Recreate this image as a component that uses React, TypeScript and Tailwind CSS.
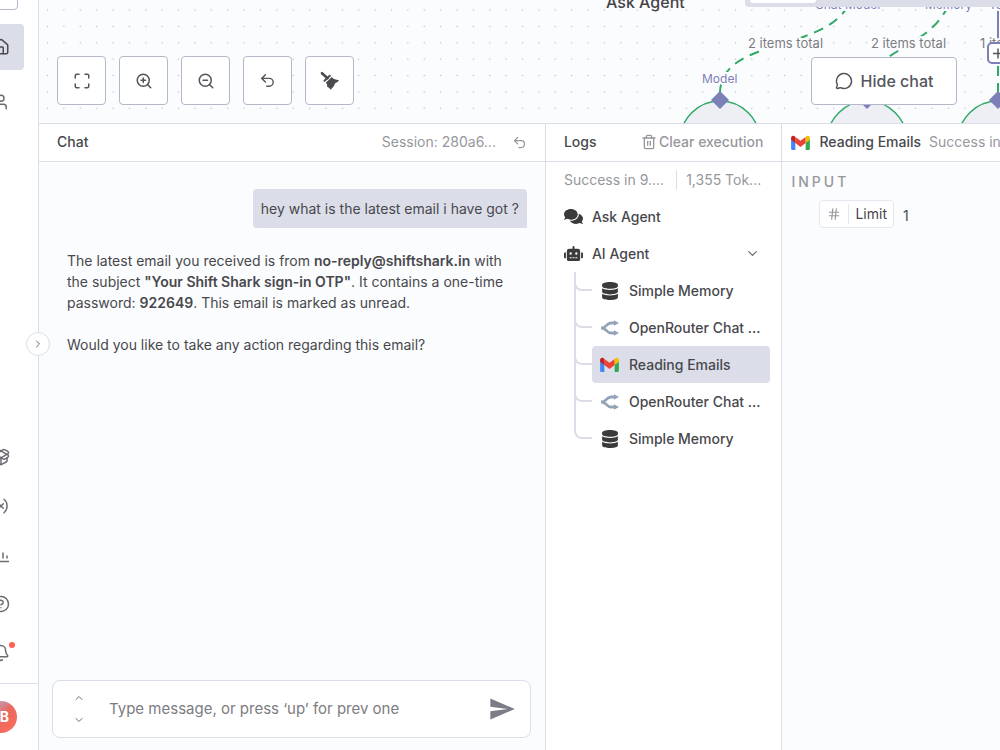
import type { ReactNode } from "react";
import {
  ChevronDown,
  ChevronRight,
  ChevronUp,
  CircleHelp,
  Bell,
  Hash,
  House,
  Maximize,
  MessageCircle,
  PackageOpen,
  Trash2,
  Undo2,
  User,
  Variable,
  ZoomIn,
  ZoomOut,
} from "lucide-react";
import { FaComments, FaDatabase, FaRobot } from "react-icons/fa";
import { MdSend } from "react-icons/md";

function GmailIcon() {
  return (
    <svg viewBox="0 0 20 16" className="h-[15px] w-[19px] shrink-0" aria-hidden="true">
      <path d="M0 3v11.5A1.4 1.4 0 0 0 1.4 16H4.5V6.5Z" fill="#4285f4" />
      <path d="M20 3v11.5a1.4 1.4 0 0 1-1.4 1.5H15.5V6.5Z" fill="#34a853" />
      <path d="M4.5 2v6.5L10 12.7l5.5-4.2V2L10 6.2Z" fill="#ea4335" />
      <path d="M0 3v2.1l4.5 3.4V2l-.8-.6C2.2.3 0 1.2 0 3Z" fill="#c5221f" />
      <path d="M20 3v2.1l-4.5 3.4V2l.8-.6C17.8.3 20 1.2 20 3Z" fill="#fbbc04" />
    </svg>
  );
}

function OpenRouterIcon() {
  return (
    <svg viewBox="0 0 20 16" className="h-4 w-5 shrink-0" aria-hidden="true">
      <path
        d="M1 8h1c4 0 4.5-5 9-5h4M1 8h1c4 0 4.5 5 9 5h4"
        fill="none"
        stroke="#94a3b8"
        strokeWidth="2.8"
      />
      <path d="M14 .2L19 3l-5 2.8ZM14 10.2l5 2.8-5 2.8Z" fill="#94a3b8" />
    </svg>
  );
}

function BroomIcon() {
  return (
    <svg viewBox="0 0 20 20" className="size-5" fill="#4a4a4f" aria-hidden="true">
      <path d="M2 2.2l5.5 5" stroke="#4a4a4f" strokeWidth="2.6" strokeLinecap="round" />
      <path d="M4.5 9.8L9.8 4.8" stroke="#4a4a4f" strokeWidth="2" strokeLinecap="round" />
      <path d="M5.8 11.7L11.8 6c1.5 2.6 4.2 2.6 7.2 3.2-1 2.2-3 1.8-4 3.3-.6 2-2.2 4.500-4.600 6.300-.6-1.600-1.600-2.300-3.400-3.300.4-1.400.2-2.500-1.200-3.800Z" />
    </svg>
  );
}

function InsightsIcon() {
  return (
    <svg viewBox="0 0 18 18" className="size-[18px]" fill="none" stroke="currentColor" strokeWidth="1.5" aria-hidden="true">
      <path d="M1 15.5h16M3 12.5v-3M7 12.5v-8M11 12.5v-6M15 12.5v-3" />
    </svg>
  );
}

const tools = [
  { label: "Zoom to fit", icon: <Maximize size={18} /> },
  { label: "Zoom in", icon: <ZoomIn size={18} /> },
  { label: "Zoom out", icon: <ZoomOut size={18} /> },
  { label: "Reset zoom", icon: <Undo2 size={17} /> },
  { label: "Tidy up", icon: <BroomIcon /> },
];

const subNodes = [
  { name: "Simple Memory", icon: <FaDatabase size={18} /> },
  { name: "OpenRouter Chat ...", icon: <OpenRouterIcon /> },
  { name: "Reading Emails", icon: <GmailIcon />, active: true },
  { name: "OpenRouter Chat ...", icon: <OpenRouterIcon /> },
  { name: "Simple Memory", icon: <FaDatabase size={18} /> },
];

function SideItem({ label, children }: { label: string; children: ReactNode }) {
  return (
    <a
      href="#"
      aria-label={label}
      className="flex h-[49px] items-center justify-center text-[#6b6b72]"
    >
      {children}
    </a>
  );
}

function Sidebar() {
  return (
    <aside className="relative w-[39px] shrink-0 border-r border-[#dbdee9] bg-white">
      <div className="flex h-full flex-col overflow-hidden">
        <div className="-ml-[22px] flex w-[46px] flex-1 flex-col">
          <button
            aria-label="Add"
            className="-mt-4 h-[26px] w-[40px] shrink-0 rounded border border-[#b4b7c9]"
          />
          <a
            href="#"
            aria-label="Overview"
            className="mt-[14px] flex h-[46px] items-center justify-center rounded bg-[#dbdee9] text-[#4a4a4f]"
          >
            <House size={18} />
          </a>
          <div className="mt-[7px]">
            <SideItem label="Personal">
              <User size={18} />
            </SideItem>
          </div>
          <nav className="mt-auto mb-[6px]">
            <SideItem label="Templates">
              <PackageOpen size={18} />
            </SideItem>
            <SideItem label="Variables">
              <Variable size={18} />
            </SideItem>
            <SideItem label="Insights">
              <InsightsIcon />
            </SideItem>
            <SideItem label="Help">
              <CircleHelp size={18} />
            </SideItem>
            <SideItem label="What's new">
              <span className="relative">
                <Bell size={18} />
                <span className="absolute -top-[2px] -right-[5px] size-[6px] rounded-full bg-[#ff6150]" />
              </span>
            </SideItem>
          </nav>
        </div>
        <div className="flex h-[67px] items-center border-t border-[#dbdee9]">
          <div className="-ml-[15px] flex size-8 items-center justify-end rounded-full bg-linear-to-br from-[#8fb4f0] via-[#e8685f] to-[#ff6f5c] pr-2 text-sm font-bold text-white">
            B
          </div>
        </div>
      </div>
      <button
        aria-label="Expand menu"
        className="absolute top-[332px] -right-[12px] z-10 flex size-6 items-center justify-center rounded-full border border-[#dbdee9] bg-white text-[#6b6b72]"
      >
        <ChevronRight size={12} />
      </button>
    </aside>
  );
}

function AgentNode({ x }: { x: number }) {
  return (
    <g>
      <circle cx={x} cy={141} r={40} fill="#eeeff5" stroke="#2fa968" strokeWidth={1.5} />
      <path d={`M${x} 91l9 9-9 9-9-9Z`} fill="#7d7fb9" />
    </g>
  );
}

function Canvas() {
  return (
    <section className="relative h-[123px] shrink-0 overflow-hidden bg-[#fbfcfe]">
      <svg className="absolute inset-0 size-full" aria-hidden="true">
        <pattern id="dots" x="0.3" y="1.8" width="16.38" height="16.38" patternUnits="userSpaceOnUse">
          <circle cx="8.2" cy="8.2" r="0.7" fill="#b9bccb" />
        </pattern>
        <rect width="100%" height="100%" fill="url(#dots)" />
      </svg>
      <svg viewBox="39 0 961 123" className="absolute top-0 left-0 h-[123px] w-[961px] font-['Inter',sans-serif]">
        <g fill="none" stroke="#2fa968" strokeWidth="2" strokeDasharray="10 7">
          <path d="M848 6C822 52 722 38 720 92" />
          <path d="M948 6C928 50 870 48 867 92" />
          <path d="M998 66V92" />
        </g>
        <path d="M998 6V44" stroke="#7d7fb9" strokeWidth="2" />
        <AgentNode x={720} />
        <AgentNode x={867} />
        <AgentNode x={998} />
        <g fontSize="12" fill="#7d7fb9" stroke="#fbfcfe" strokeWidth="4" paintOrder="stroke">
          <text x="702" y="83">Model</text>
          <text x="815" y="9">Chat Model</text>
          <text x="925" y="9">Memory</text>
          <text x="989" y="9">Tool</text>
        </g>
        <g fontSize="13" fill="#7c7c82" stroke="#fbfcfe" strokeWidth="4" paintOrder="stroke">
          <text x="748" y="48">2 items total</text>
          <text x="871" y="48">2 items total</text>
          <text x="980" y="48">1 item</text>
        </g>
        <rect x="988" y="43" width="20" height="20" rx="4" fill="#fff" stroke="#7d7fb9" strokeWidth="2" />
        <path d="M993 53.5h10M998 48.5v10" stroke="#55555c" strokeWidth="1.5" />
        <text x="606" y="8" fontSize="16" fontWeight="500" fill="#444448">Ask Agent</text>
      </svg>
      <div className="absolute top-0 right-0 left-[706px] h-[7px] rounded-bl bg-[#dbdee9] pl-[5px]">
        <div className="h-[3px] w-[66px] rounded-b bg-white" />
      </div>
      <div className="absolute top-[56px] left-[18px] flex gap-[13px]">
        {tools.map((tool) => (
          <button
            key={tool.label}
            aria-label={tool.label}
            className="flex size-[49px] items-center justify-center rounded border border-[#b4b7c9] bg-white text-[#55555c]"
          >
            {tool.icon}
          </button>
        ))}
      </div>
      <button className="absolute top-[57px] left-[772px] flex h-12 w-[146px] items-center justify-center gap-2 rounded border border-[#b4b7c9] bg-white text-base font-medium text-[#55555c]">
        <MessageCircle size={18} />
        Hide chat
      </button>
    </section>
  );
}

function ChatPanel() {
  return (
    <section className="flex min-w-0 flex-[507] flex-col border-r border-[#dbdee9] bg-[#fbfcfe]">
      <header className="flex h-[38px] shrink-0 items-center border-b border-[#dbdee9] bg-white px-[18px] pb-px">
        <h2 className="flex-1 font-medium">Chat</h2>
        <span className="text-[#97979d]">Session: 280a6...</span>
        <button aria-label="Reset session" className="ml-4 text-[#97979d]">
          <Undo2 size={15} />
        </button>
      </header>
      <div className="flex flex-1 flex-col px-[18px] pt-[27px] leading-[21px]">
        <p className="self-end rounded rounded-br-none bg-[#dbdee9] px-2 py-[9px]">
          hey what is the latest email i have got ?
        </p>
        <div className="px-[10px] pt-[22px]">
          <p>
            The latest email you received is from <strong className="font-semibold">no-reply@shiftshark.in</strong> with
            the subject <strong className="font-semibold">"Your Shift Shark sign-in OTP"</strong>. It contains a
            one-time password: <strong className="font-semibold">922649</strong>. This email is marked as unread.
          </p>
          <p className="mt-[21px]">Would you like to take any action regarding this email?</p>
        </div>
      </div>
      <form className="mr-[14px] mb-3 ml-[13px] flex h-[58px] items-center rounded-lg border border-[#dbdee9] bg-white pr-[14px] pl-5">
        <div className="flex flex-col gap-[10px] text-[#6b6b72]">
          <button type="button" aria-label="Previous message">
            <ChevronUp size={12} />
          </button>
          <button type="button" aria-label="Next message">
            <ChevronDown size={12} />
          </button>
        </div>
        <input
          aria-label="Message"
          placeholder="Type message, or press ‘up’ for prev one"
          className="ml-6 min-w-0 flex-1 text-[15px] outline-none placeholder:text-[#7c7c82]"
        />
        <button type="submit" aria-label="Send" className="text-[#7b7c85]">
          <MdSend size={28} />
        </button>
      </form>
    </section>
  );
}

function LogsPanel() {
  return (
    <section className="flex min-w-0 flex-[236] flex-col border-r border-[#dbdee9] bg-white">
      <header className="flex h-[38px] shrink-0 items-center justify-between border-b border-[#dbdee9] px-[18px] pb-px">
        <h2 className="font-medium">Logs</h2>
        <button className="flex items-center gap-[2px] font-medium text-[#97979d]">
          <Trash2 size={16} />
          Clear execution
        </button>
      </header>
      <div className="flex h-9 items-center px-[18px] whitespace-nowrap text-[#97979d]">
        <span>Success in 9....</span>
        <span className="ml-3 border-l border-[#dbdee9] pl-[9px]">1,355 Tok...</span>
      </div>
      <ul className="pr-[11px] pl-[18px] font-medium whitespace-nowrap">
        <li className="flex h-[37px] items-center gap-[9px]">
          <FaComments size={19} color="#3a3a3d" />
          Ask Agent
        </li>
        <li>
          <div className="flex h-[37px] items-center gap-[9px]">
            <FaRobot size={19} color="#3a3a3d" />
            <span className="flex-1">AI Agent</span>
            <button aria-label="Collapse" className="mr-[10px] text-[#6b6b72]">
              <ChevronDown size={15} />
            </button>
          </div>
          <ul className="pl-[10px]">
            {subNodes.map((node, i) => (
              <li key={i} className="flex h-[37px]">
                <div
                  className={`w-[18px] shrink-0 border-[#dbdee9] ${
                    i < subNodes.length - 1 ? "border-l-2" : "pl-[2px]"
                  }`}
                >
                  <div className="-ml-[2px] h-1/2 rounded-bl-lg border-b-2 border-l-2 border-[#dbdee9]" />
                </div>
                <a
                  href="#"
                  className={`flex min-w-0 flex-1 items-center rounded pl-2 ${node.active ? "bg-[#dbdee9]" : ""}`}
                >
                  <span className="mr-[9px] flex w-5 justify-center text-[#3a3a3d]">{node.icon}</span>
                  {node.name}
                </a>
              </li>
            ))}
          </ul>
        </li>
      </ul>
    </section>
  );
}

function DetailsPanel() {
  return (
    <section className="min-w-0 flex-[218] overflow-hidden bg-[#fbfcfe] whitespace-nowrap">
      <header className="flex h-[38px] items-center border-b border-[#dbdee9] bg-white pb-px pl-[9px]">
        <GmailIcon />
        <h2 className="ml-[9px] font-medium">Reading Emails</h2>
        <span className="ml-2 text-[#97979d]">Success in 1.2s</span>
      </header>
      <h3 className="mt-[10px] ml-[9px] font-medium tracking-[3px] text-[#97979d]">INPUT</h3>
      <div className="mt-2 ml-[37px] flex items-center gap-[9px]">
        <div className="flex h-[28px] items-center rounded border border-[#e6e8f1] bg-white">
          <span className="px-[7px] text-[#97979d]">
            <Hash size={14} />
          </span>
          <span className="border-l border-[#e6e8f1] px-[6px]">Limit</span>
        </div>
        <span className="pt-1">1</span>
      </div>
    </section>
  );
}

export default function App() {
  return (
    <div className="flex h-screen overflow-hidden bg-white font-['Inter',sans-serif] text-sm text-[#48484c]">
      <Sidebar />
      <main className="flex min-w-0 flex-1 flex-col">
        <Canvas />
        <div className="flex min-h-0 flex-1 border-t border-[#dbdee9]">
          <ChatPanel />
          <LogsPanel />
          <DetailsPanel />
        </div>
      </main>
    </div>
  );
}
